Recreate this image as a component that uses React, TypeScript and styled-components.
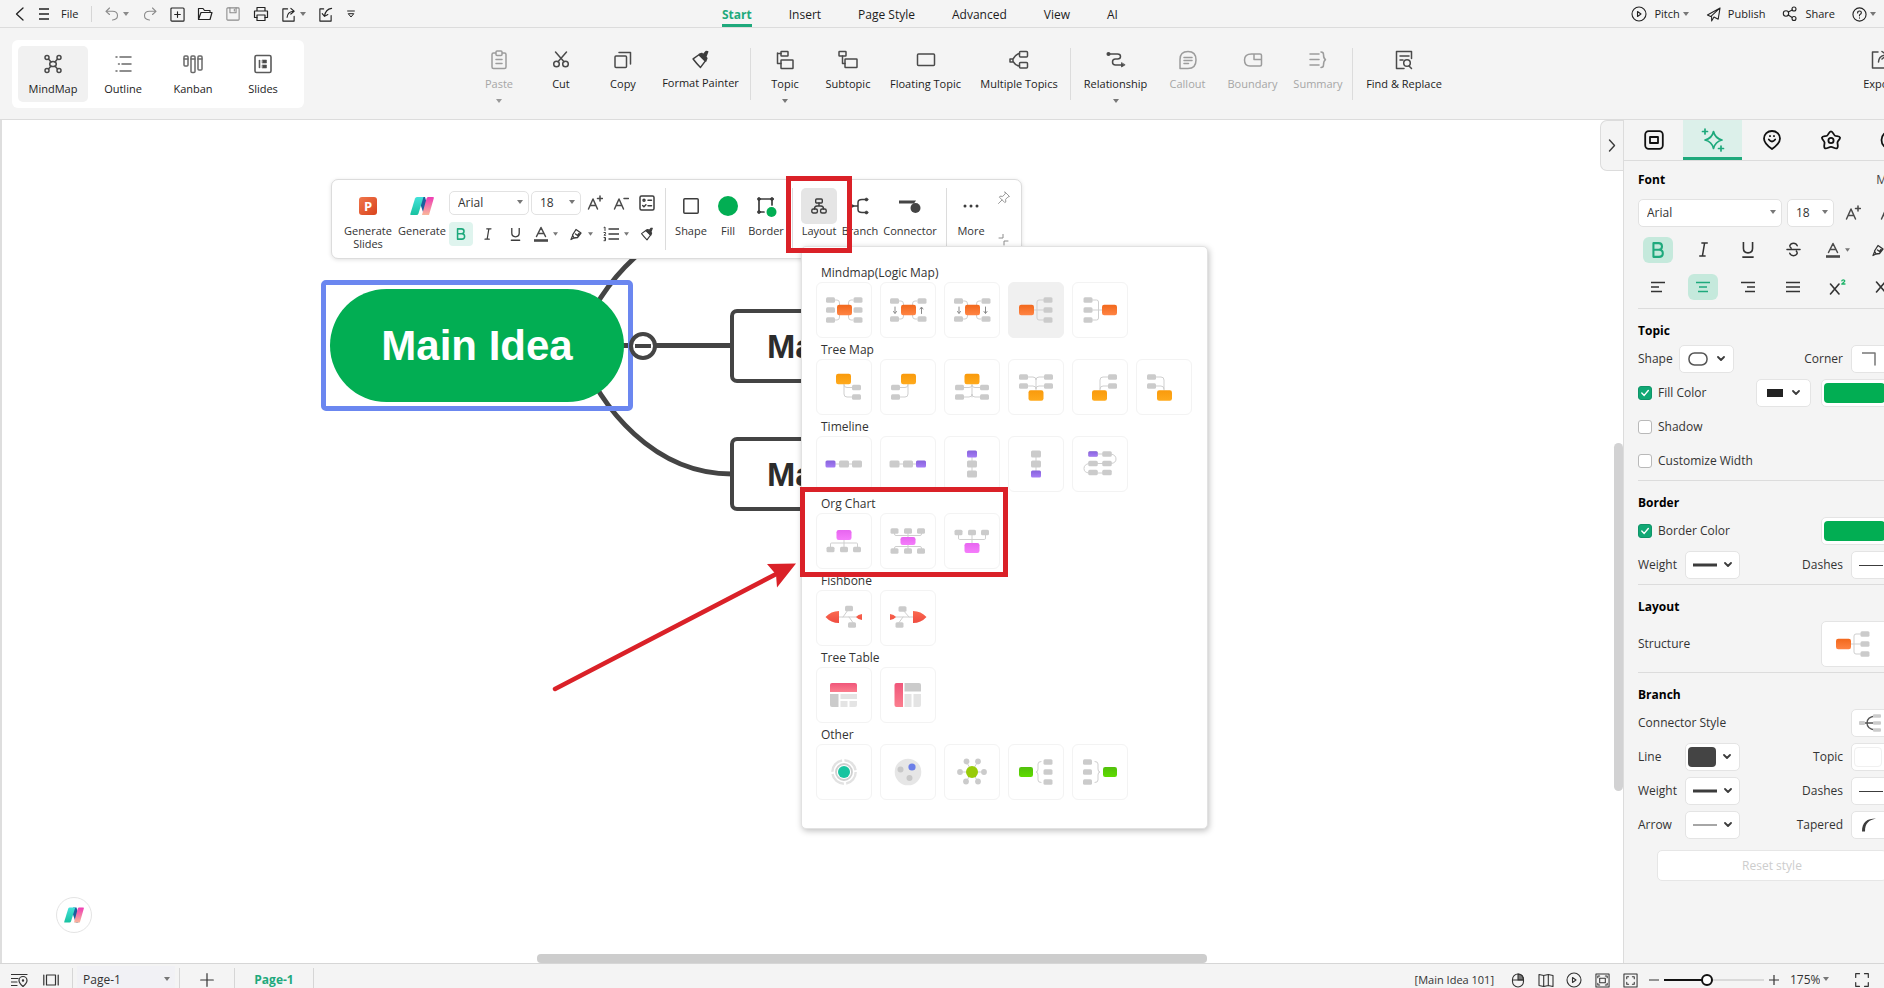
import React from "react";
import styled, { createGlobalStyle, css } from "styled-components";

const green = "#1ea97c";
const fill = "#02ae53";
const ink = "#3c3c3c";
const red = "#da2128";

const Global = createGlobalStyle`
  * { box-sizing: border-box; }
  html, body { margin: 0; padding: 0; }
  body {
    font-family: "Open Sans", "Noto Sans", sans-serif;
    font-size: 12px;
    line-height: 16px;
    color: #1c1c1c;
    background: #f4f4f4;
    overflow: hidden;
  }
  button, select, input { font: inherit; color: inherit; margin: 0; }
  button { background: none; border: 0; padding: 0; cursor: pointer; white-space: nowrap; }
  svg { display: block; flex: none; }
`;

/* ---------- icons ---------- */

type IconProps = { size?: number; w?: number; h?: number; box?: string; sw?: number; color?: string; children?: React.ReactNode };
const Icon = ({ size = 16, w, h, box = "0 0 16 16", sw = 1.2, color = "currentColor", children }: IconProps) => (
  <svg width={w ?? size} height={h ?? size} viewBox={box} fill="none" stroke={color} strokeWidth={sw} strokeLinejoin="round" strokeLinecap="round" aria-hidden="true">
    {children}
  </svg>
);
const Caret = ({ color = "#777", w = 6 }: { color?: string; w?: number }) => (
  <svg width={w} height={4} viewBox="0 0 6 4" aria-hidden="true"><path d="M0 0h6L3 4z" fill={color} /></svg>
);
const Chevron = () => <Icon w={8} h={6} box="0 0 8 6" sw={1.8} color={ink}><path d="M1 1l3 3 3-3" /></Icon>;

const NLogo = ({ w = 24, h = 18 }: { w?: number; h?: number }) => (
  <svg width={w} height={h} viewBox="0 0 24 18" aria-hidden="true">
    <path d="M11 0h4l4 14-2 4h-3L10 6z" fill="#1b5f9e" />
    <path d="M7 0h6.5L8.5 16.500Q8 18 6.500 18H1Q0 18 .3 17L5 1.500Q5.500 0 7 0z" fill="url(#gTeal)" />
    <path d="M18 0h5q1.200 0 .8 1.200L19 18h-7l4.500-16.500Q17 0 18 0z" fill="url(#gPink)" />
  </svg>
);

const HiddenDefs = styled.svg`position: absolute; width: 0; height: 0;`;
const Defs = () => (
  <HiddenDefs aria-hidden="true">
    <defs>
      {[
        ["gTeal", "#43e2da", "#18c2a0"], ["gPink", "#ee3bb4", "#f9b79a"], ["orange", "#f2681c", "#ff8444"],
        ["amber", "#f99a0c", "#ffaa1c"], ["violet", "#8763dd", "#a67df5"], ["magenta", "#e765f0", "#f57dfb"],
        ["coral", "#fb6a50", "#ef4b40"], ["rose", "#f0567a", "#fb7e8e"], ["lime", "#52c00c", "#5fdc00"],
      ].map(([id, a, b]) => (
        <linearGradient key={id} id={id} x1="0" y1="0" x2="0" y2="1">
          <stop offset="0" stopColor={a} /><stop offset="1" stopColor={b} />
        </linearGradient>
      ))}
    </defs>
  </HiddenDefs>
);

const Brush = ({ s = 18, color = ink }: { s?: number; color?: string }) => (
  <Icon size={s} box="0 0 18 18" sw={1.4} color={color}>
    <path d="M7.500 4.500L2 8.500q3 4 7 8l4.500-6z" />
    <path d="M8 4l6 6.500 1-2.700-1-1.300 1.800-4.800-1.500-.2-2.800 3-1.300-1.300z" fill={color} />
  </Icon>
);
const TextA = ({ sup }: { sup?: string }) => (
  <Icon w={16} h={16} sw={1.5} color="#4a4a4a">
    <path d="M1.500 14L6 4l4.500 10M3.200 10.500h5.600" />
    {sup === "+" ? <path d="M10.500 3.500h5M13 1v5" /> : <path d="M11 3.500h4.500" />}
  </Icon>
);
const FontColor = () => (
  <Icon w={14} h={16} box="0 0 14 16" sw={1.5} color="#4a4a4a">
    <path d="M2.500 10.500L7 1.500l4.500 9M4 7.500h6" /><path d="M0 14.500h14" strokeWidth={2.6} strokeLinecap="butt" />
  </Icon>
);
const Marker = () => (
  <Icon w={14} h={14} box="0 0 14 14" sw={1.3}>
    <path d="M3.500 8L7 2.500l5 3.500-3.500 4.500-3.500.5zM5 11l-3 1.500L3.500 9M6.500 7l2 1.500L10 6.500" />
  </Icon>
);
const ItalicI = ({ s = 14 }: { s?: number }) => <Icon size={s} box="0 0 14 14" sw={1.4}><path d="M5.500 1h5M3.500 13h5M8 1L6 13" /></Icon>;
const UnderU = ({ s = 14 }: { s?: number }) => <Icon size={s} box="0 0 14 14" sw={1.4}><path d="M3 0v5.500q0 4 4 4t4-4V0M2.500 13.200h9" /></Icon>;
const BoldB = ({ s = 14 }: { s?: number }) => (
  <Icon size={s} box="0 0 14 14" sw={1.8} color={green}><path d="M3 1h4.500q3 0 3 2.900t-3 2.900H3zM3 6.800h5q3.200 0 3.200 3.100T8 13H3z" /></Icon>
);
const Lines = ({ xs, color }: { xs: [number, number][]; color?: string }) => (
  <Icon w={16} h={12} box="0 0 16 12" sw={1.5} color={color}>
    {xs.map(([a, b], i) => <path key={i} strokeLinecap="butt" d={`M${a} ${xs.length === 3 ? 1.5 + i * 4.5 : 1 + i * 3.3}H${b}`} />)}
  </Icon>
);
const PlayCircle = ({ s = 16 }: { s?: number }) => <Icon size={s} sw={1.1}><circle cx="8" cy="8" r="7" /><path d="M6.500 5.500l3.500 2.500-3.500 2.500z" /></Icon>;

/* ---------- title bar ---------- */

const Shell = styled.div`display: flex; flex-direction: column; height: 100vh; overflow: hidden; background: #f4f4f4;`;
const TitleBar = styled.header`
  display: grid; grid-template-columns: minmax(0, 722px) auto 1fr;
  height: 28px; flex: none; border-bottom: 1px solid #dcdcdc; font-size: 11px;
`;
const QuickBar = styled.div`display: flex; align-items: center; padding: 1px 0 0 11px;`;
const Quick = styled.button<{ $w?: number; $dim?: boolean }>`
  display: flex; align-items: center; justify-content: center; gap: 4px;
  width: ${p => p.$w ?? 28}px; height: 26px; color: ${p => (p.$dim ? "#8a8a8a" : "#222")};
`;
const FileBtn = styled(Quick)`margin-right: 13px; width: auto; padding-left: 1px;`;
const VRule = styled.span`flex: none; width: 1px; height: 16px; background: #d6d6d6;`;
const Tabs = styled.nav`display: flex; gap: 37px;`;
const Tab = styled.a<{ $on?: boolean }>`
  display: flex; align-items: center; height: 27px; padding-top: 2px; text-decoration: none; font-size: 12px;
  color: ${p => (p.$on ? green : "#1c1c1c")}; font-weight: ${p => (p.$on ? 700 : 400)};
  box-shadow: ${p => (p.$on ? `inset 0 -3px ${green}` : "none")};
`;
const TitleActions = styled.div`display: flex; align-items: center; justify-content: flex-end; gap: 17px; padding: 1px 8px 0 0;`;
const TitleAction = styled.button`display: flex; align-items: center; gap: 7px; height: 26px; color: #222;`;
const TightCaret = styled.span`margin-left: -4px;`;

const TitleBarView = () => (
  <TitleBar>
    <QuickBar>
      <Quick $w={16} aria-label="Back"><Icon w={9} h={14} box="0 0 9 14" sw={1.3}><path d="M8 1L1.500 7 8 13" /></Icon></Quick>
      <Quick $w={33} aria-label="Menu"><Icon w={10} h={12} box="0 0 10 12" sw={1.3}><path d="M0 1h10M0 6h10M0 11h10" /></Icon></Quick>
      <FileBtn>File</FileBtn>
      <VRule />
      <Quick $w={50} $dim aria-label="Undo"><Icon size={14} box="0 0 14 14" sw={1.1}><path d="M4.500 1L1 4.300l3.500 3.200M1 4.300h6.500q5 0 5 4.200t-5 4.500" /></Icon><Caret color="#8a8a8a" /></Quick>
      <Quick $w={16} $dim aria-label="Redo"><Icon size={14} box="0 0 14 14" sw={1.1}><path d="M9.500 1L13 4.300 9.500 7.500M13 4.300H6.500q-5 0-5 4.200t5 4.500" /></Icon></Quick>
      <Quick $w={38} aria-label="New"><Icon size={15} sw={1.2}><rect x="1" y="1" width="14" height="14" rx="1" /><path d="M8 5v6M5 8h6" /></Icon></Quick>
      <Quick $w={18} aria-label="Open"><Icon size={16} sw={1.2}><path d="M1.500 13.500v-11H6l1.500 2h5.500v2M1.500 13.500l2.500-7h11l-2 7z" /></Icon></Quick>
      <Quick $w={38} $dim aria-label="Save"><Icon size={14} sw={1.2}><rect x="1" y="1" width="14" height="14" rx="1" /><path d="M4.500 1v5.500h7V1M9.500 2.500v2" /></Icon></Quick>
      <Quick $w={18} aria-label="Print"><Icon size={16} sw={1.2}><path d="M4 5V1.500h8V5M4 11.500H1.500V5h13v6.500H12" /><rect x="4" y="9" width="8" height="5.500" /></Icon></Quick>
      <Quick $w={46} aria-label="Export"><Icon size={15} sw={1.2}><path d="M7 2H2v13h12v-5M10.500 1.500L14 4.500l-3.500 3M14 4.500q-7 0-7.500 6.500" /></Icon><Caret /></Quick>
      <Quick $w={19} aria-label="Import"><Icon size={15} sw={1.2}><path d="M6 2H2v13h12V9M14.500 1.500Q8 2.500 7 9.500M4.500 7l2.500 3 3.500-2" /></Icon></Quick>
      <Quick $w={32} aria-label="Customize"><Icon w={8} h={8} box="0 0 8 8" sw={1}><path d="M.6 1h6.800M1.500 4L4 7l2.500-3z" /></Icon></Quick>
    </QuickBar>
    <Tabs>
      {["Start", "Insert", "Page Style", "Advanced", "View", "AI"].map((t, i) => <Tab key={t} href="#" $on={i === 0}>{t}</Tab>)}
    </Tabs>
    <TitleActions>
      <TitleAction><PlayCircle /><span>Pitch</span><TightCaret><Caret /></TightCaret></TitleAction>
      <TitleAction><Icon size={15} sw={1.1}><path d="M15 1L1.500 8.500l3.500 1.700L15 1l-2 12-4.500-2.300L6 15v-4.500" /></Icon>Publish</TitleAction>
      <TitleAction><Icon size={16} sw={1.1}><circle cx="4" cy="7.500" r="2.700" /><circle cx="12" cy="3" r="2" /><circle cx="12" cy="12.500" r="2" /><path d="M6.300 6L10.200 4M6.200 9l4 2.500" /></Icon>Share</TitleAction>
      <TitleAction aria-label="Help"><Icon size={15} sw={1.2}><circle cx="8" cy="8" r="7" /><path d="M6 6.300q0-2.100 2-2.100t2 1.900q0 1.200-2 2.300v1M8 11.600v.2" /></Icon><TightCaret><Caret /></TightCaret></TitleAction>
    </TitleActions>
  </TitleBar>
);

/* ---------- ribbon ---------- */

const Ribbon = styled.div`display: flex; height: 92px; flex: none; border-bottom: 1px solid #dcdcdc; font-size: 11px; overflow: hidden;`;
const ViewCard = styled.div`display: flex; margin: 12px 0 0 12px; padding: 6px; height: 68px; border-radius: 6px; background: #fff; flex: none;`;
const ViewBtn = styled.button<{ $on?: boolean }>`
  display: flex; flex-direction: column; align-items: center; justify-content: center; gap: 7px; width: 70px; height: 56px; padding-top: 3px;
  border-radius: 5px; background: ${p => (p.$on ? "#f1f1f1" : "none")}; color: #1c1c1c;
`;
const Tools = styled.div`display: flex; margin-left: 164px; flex: 1; padding-top: 22px;`;
const RibbonBtn = styled.button<{ $w: number; $dim?: boolean }>`
  display: flex; flex-direction: column; align-items: center; flex: none; width: ${p => p.$w}px; height: 60px;
  color: ${p => (p.$dim ? "#a6a6a6" : "#1c1c1c")};
  & > span { margin: 6px 0 7px; height: 16px; }
  & > svg:first-child { color: ${p => (p.$dim ? "#9c9c9c" : "#4a4a4a")}; }
`;
const RibbonRule = styled.span<{ $l?: number; $r?: number }>`width: 1px; height: 52px; flex: none; background: #dcdcdc; margin: -2px ${p => p.$r ?? 3}px 0 ${p => p.$l ?? 3}px;`;
const ExportBtn = styled(RibbonBtn)`margin-left: auto; margin-right: -26px;`;

const R = ({ children }: { children: React.ReactNode }) => <Icon size={20} box="0 0 20 20" sw={1.5}>{children}</Icon>;

const RibbonView = () => (
  <Ribbon>
    <ViewCard>
      <ViewBtn $on><Icon size={20} box="0 0 20 20" sw={1.5} color="#4a4a4a"><ellipse cx="10" cy="10" rx="3.300" ry="2.600" /><circle cx="4" cy="3.500" r="2" /><circle cx="16" cy="3.500" r="2" /><circle cx="4" cy="16.500" r="2" /><circle cx="16" cy="16.500" r="2" /><path d="M5.500 5L8 8M14.500 5L12 8M5.500 15L8 12M14.500 15L12 12" /></Icon>MindMap</ViewBtn>
      <ViewBtn><Icon size={20} box="0 0 20 20" sw={1.5} color="#6a6a6a"><path d="M7 3h11M9 10h9M7 17h11M3 3h1M5.500 10h.8M3 17h1" /></Icon>Outline</ViewBtn>
      <ViewBtn><Icon size={20} box="0 0 20 20" sw={1.5} color="#6a6a6a"><rect x="1" y="2" width="4" height="10" rx="1" /><rect x="8" y="2" width="4" height="16.500" rx="1" /><rect x="15" y="2" width="4" height="14" rx="1" /><path d="M1 5h4M8 5h4M15 5h4" /></Icon>Kanban</ViewBtn>
      <ViewBtn><Icon size={20} box="0 0 20 20" sw={1.6} color="#5a5a5a"><rect x="2" y="1.500" width="16" height="17" rx="1.500" /><path d="M6.500 6.500v7" /><path d="M9.500 6h4v3h-4zM9.500 11h4v3h-4z" fill="#4a4a4a" strokeWidth=".6" /></Icon>Slides</ViewBtn>
    </ViewCard>
    <Tools>
      <RibbonBtn $w={62} $dim><R><rect x="3" y="3" width="14" height="15.500" rx="1.500" /><rect x="7" y="1" width="6" height="4.500" rx="1" fill="#f4f4f4" /><path d="M7 9.500h6M7 13.500h6" /></R><span>Paste</span><Caret color="#999" /></RibbonBtn>
      <RibbonBtn $w={62}><R><circle cx="5.500" cy="14" r="2.800" /><circle cx="14.500" cy="14" r="2.800" /><path d="M4.500 2l8.500 9.800M15.500 2L7 11.800" /></R><span>Cut</span></RibbonBtn>
      <RibbonBtn $w={62}><R><rect x="2" y="6" width="11.500" height="11.500" rx="1" /><path d="M6 2.500h11.500V14" /></R><span>Copy</span></RibbonBtn>
      <RibbonBtn $w={93}><Brush s={19} /><span>Format Painter</span></RibbonBtn>
      <RibbonRule />
      <RibbonBtn $w={62}><R><path d="M2.500 3v10.500H6M2.500 3.500H6" /><rect x="6" y="1.500" width="7" height="4.500" rx=".5" /><rect x="6" y="10" width="12" height="8.500" rx=".5" /></R><span>Topic</span><Caret /></RibbonBtn>
      <RibbonBtn $w={64}><R><rect x="1" y="1.500" width="7" height="4.500" rx=".5" /><path d="M4.500 6v7.500H7" /><rect x="7" y="9" width="12" height="8.500" rx=".5" /></R><span>Subtopic</span></RibbonBtn>
      <RibbonBtn $w={91}><R><rect x="1.500" y="4" width="17" height="11.500" rx="1" /></R><span>Floating Topic</span></RibbonBtn>
      <RibbonBtn $w={96}><R><path d="M1 9h3v3H1zM4 9q3-5 6.500-5.500M4 11.500Q7 16 10.500 16" /><rect x="10.500" y="1.500" width="8" height="5.500" rx="1" /><rect x="10.500" y="12.500" width="8" height="5.500" rx="1" /></R><span>Multiple Topics</span></RibbonBtn>
      <RibbonRule $r={0} />
      <RibbonBtn $w={89}><R><circle cx="2.500" cy="4" r="1.300" fill="#4a4a4a" /><path d="M3 4h8.500q3 0 3 2.500T11.500 9H9.500q-3 0-3 3t3 3H16" /><path d="M15.500 13v4l3.300-2z" fill="#4a4a4a" strokeWidth=".8" /></R><span>Relationship</span><Caret /></RibbonBtn>
      <RibbonBtn $w={55} $dim><R><path d="M2 18.500V9.500q0-8 8-8t8 8.500-8 8.500zM6 7.500h8M6 10.500h8M6 13.500h4.500" /></R><span>Callout</span></RibbonBtn>
      <RibbonBtn $w={75} $dim><R><path d="M8.500 4H17q1.500 0 1.500 1.500v9q0 1.500-1.500 1.500H7q-5.500 0-5.500-6t7-6zM11 4v5.500h7.500" /></R><span>Boundary</span></RibbonBtn>
      <RibbonBtn $w={56} $dim><R><path d="M2 4h9M2 9.500h9M2 15h9M13 2q2.500 0 2.500 2.500 0 4 2 5.200-2 1.300-2 5.300 0 2.500-2.500 2.500" /></R><span>Summary</span></RibbonBtn>
      <RibbonRule $l={6} $r={4} />
      <RibbonBtn $w={94}><R><path d="M10 18.500H2.500v-17h15v7M6 6h9M6 10h3" /><circle cx="13" cy="13" r="3.300" /><path d="M15 16l2.500 2.500" /></R><span>Find &amp; Replace</span></RibbonBtn>
      <ExportBtn $w={60}><R><path d="M8 2H2.500v16h15v-5M12 1.500L17 5l-5 4M17 5Q9 5 8.500 12" /></R><span>Export</span></ExportBtn>
    </Tools>
  </Ribbon>
);

/* ---------- layout tile drawings ---------- */

const G = "#cbcbcb";
type P = [number, number];
const Node = ({ c, w = 9, h = 5.5, f = G, r = 1.5 }: { c: P; w?: number; h?: number; f?: string; r?: number }) => (
  <rect x={c[0] - w / 2} y={c[1] - h / 2} width={w} height={h} rx={r} fill={f} stroke="none" />
);
const Root = ({ c, f, h = 10.5 }: { c: P; f: string; h?: number }) => <Node c={c} w={15} h={h} r={2.2} f={`url(#${f})`} />;
const Arrow = ({ x, up }: { x: number; up?: boolean }) => (
  <path d={up ? `M${x} 31.500v-6M${x - 1.5} 27l1.500-2 1.500 2` : `M${x} 25v6M${x - 1.5} 29.500l1.500 2 1.500-2`} stroke="#8a8a8a" strokeWidth="1" />
);
const nodes = (xs: number[], ys: number[], w?: number) => xs.flatMap(x => ys.map(y => <Node key={`${x}-${y}`} c={[x, y]} w={w} />));
const wings = (d: number) => (
  <path d={`M19 ${28 - d}h2q2.500 0 2.500 3v2M37 ${28 - d}h-2q-2.500 0-2.500 3v2M19 ${28 + d}h2q2.500 0 2.500-3v-2M37 ${28 + d}h-2q-2.500 0-2.500-3v-2`} />
);
const logicRight = <><path d="M26 28h10M36 18h-5q-2 0-2 2v16q0 2 2 2h5" />{nodes([40], [18, 28, 38])}<Root c={[18.5, 28]} f="orange" /></>;

const groups: { name: string; tiles: React.ReactNode[] }[] = [
  { name: "Mindmap(Logic Map)", tiles: [
    <>{wings(10)}{nodes([14.5, 42], [18, 28, 38])}<Root c={[28.5, 28]} f="orange" /></>,
    <>{wings(9)}{nodes([14.5, 42], [19, 37])}<Root c={[28.5, 28]} f="orange" /><Arrow x={15} /><Arrow x={41.5} up /></>,
    <>{wings(9)}{nodes([14.5, 42], [19, 37])}<Root c={[28.5, 28]} f="orange" /><Arrow x={15} /><Arrow x={41.5} /></>,
    logicRight,
    <><path d="M30 28H20M20 18h4.500q2 0 2 2v16q0 2-2 2H20" />{nodes([16], [18, 28, 38])}<Root c={[37.5, 28]} f="orange" /></>,
  ] },
  { name: "Tree Map", tiles: [
    <><path d="M28 25v10q0 3 3 3h6M28 26q0 2.500 3 2.500h6" />{nodes([40.5], [28.5, 38])}<Root c={[27.5, 20]} f="amber" /></>,
    <><path d="M28 25v10q0 3-3 3h-6M28 26q0 2.500-3 2.500h-6" />{nodes([15.5], [28.5, 38])}<Root c={[28.5, 20]} f="amber" /></>,
    <><path d="M28 25v13M19 38h6q3 0 3-3 0 3 3 3h6M19 28.500h6q3 0 3-2.500 0 2.500 3 2.500h6" />{nodes([15.5, 40.5], [28.5, 38])}<Root c={[28, 20]} f="amber" /></>,
    <><path d="M28 31V21M19 18h6q3 0 3 3 0-3 3-3h6M19 27h6q3 0 3 3 0-3 3-3h6" />{nodes([15.5, 40.5], [18, 27])}<Root c={[28, 36.5]} f="amber" /></>,
    <><path d="M28 31V21q0-3 3-3h6M28 30q0-3 3-3h6" />{nodes([40.5], [18, 27])}<Root c={[27.5, 36.5]} f="amber" /></>,
    <><path d="M28 31V21q0-3-3-3h-6M28 30q0-3-3-3h-6" />{nodes([15.5], [18, 27])}<Root c={[28.5, 36.5]} f="amber" /></>,
  ] },
  { name: "Timeline", tiles: [
    <><path d="M15 28h26" />{[14.5, 28, 41].map((x, i) => <Node key={x} c={[x, 28]} w={10} h={7} f={i === 0 ? "url(#violet)" : G} />)}</>,
    <><path d="M15 28h26" />{[14.5, 28, 41].map((x, i) => <Node key={x} c={[x, 28]} w={10} h={7} f={i === 2 ? "url(#violet)" : G} />)}</>,
    <><path d="M28 18v20" />{[18, 28, 38].map((y, i) => <Node key={y} c={[28, y]} w={10} h={7} f={i === 0 ? "url(#violet)" : G} />)}</>,
    <><path d="M28 18v20" />{[18, 28, 38].map((y, i) => <Node key={y} c={[28, y]} w={10} h={7} f={i === 2 ? "url(#violet)" : G} />)}</>,
    <><path d="M22 18h17q5 1 5 5t-5 4.500H17q-5 1-5 5t5 4.500h18" />{nodes([21, 35], [18, 27.5, 36.5], 9.5)}<Node c={[21, 18]} w={9.5} f="url(#violet)" /></>,
  ] },
  { name: "Org Chart", tiles: [
    <><path d="M28 27v7M14.500 34v-3q0-1 1-1h25q1 0 1 1v3" />{nodes([14.5, 28, 41], [36.5], 8)}<Root c={[28, 22]} f="magenta" h={10} /></>,
    <><path d="M14.500 20v1q0 1.500 1.500 1.500h24q1.500 0 1.500-1.500v-1M14.500 36v-1q0-1.500 1.500-1.500h24q1.500 0 1.500 1.500v1M28 20v16" />{nodes([14.5, 28, 41], [18, 38], 8)}<Root c={[28, 28]} f="magenta" h={8} /></>,
    <><path d="M28 22v8M14.500 22v3q0 1.500 1 1.500h25q1 0 1-1.500v-3" />{nodes([14.5, 28, 41], [19.5], 8)}<Root c={[28, 35]} f="magenta" h={10} /></>,
  ] },
  { name: "Fishbone", tiles: [
    <><path d="M22 27h20M27 27l5-7M33 27l5 7" /><path d="M23 21v12q-8 0-13.500-6Q15 21 23 21zM46 24v6q-4-.5-6-3 2-2.500 6-3z" fill="url(#coral)" stroke="none" />{nodes([33], [18.5], 8)}{nodes([36], [35], 8)}</>,
    <><path d="M14 27h20M23 20l6 7M18 34l5-7" /><path d="M33 21v12q8 0 13.500-6Q41 21 33 21zM10 24v6q4-.5 6-3-2-2.500-6-3z" fill="url(#coral)" stroke="none" />{nodes([22.5], [19], 8)}{nodes([19.5], [35], 8)}</>,
  ] },
  { name: "Tree Table", tiles: [
    <g stroke="none"><path d="M14 25v-7q0-2 2-2h23q2 0 2 2v7z" fill="url(#rose)" /><path d="M14 27h8.500v13H16q-2 0-2-2z" fill={G} /><path d="M24.500 27H41v5H24.500zM24.500 34h7v6h-7zM33.500 34H41v4q0 2-2 2h-5.500z" fill="#e4e4e4" /></g>,
    <g stroke="none"><path d="M23 16v24h-6.500q-2 0-2-2V18q0-2 2-2z" fill="url(#rose)" /><path d="M24.500 16H39q2 0 2 2v6.500H24.500z" fill={G} /><path d="M24.500 27h7v13h-7zM33.500 27H41v11q0 2-2 2h-5.500z" fill="#e4e4e4" /></g>,
  ] },
  { name: "Other", tiles: [
    <><circle cx="28" cy="28" r="11.700" stroke="#e2e2e2" strokeWidth="2.400" strokeDasharray="16 2.400" strokeLinecap="butt" /><circle cx="28" cy="28" r="8" stroke="#cfcfcf" strokeWidth="1.800" /><circle cx="28" cy="28" r="6" fill="#18c4a0" stroke="none" /></>,
    <g stroke="none"><circle cx="28" cy="28" r="13.300" fill="#e6e6e6" /><circle cx="32" cy="23" r="3.600" fill="#6c7fe8" /><circle cx="20.500" cy="25.500" r="3" fill="#c8c8c8" /><circle cx="29.500" cy="34" r="3" fill="#c8c8c8" /></g>,
    <><path d="M16 28h24M22.500 18L34 38M33.500 18L22 38" /><g stroke="none" fill={G}>{([[22.5, 17.5], [34, 17.5], [16, 28], [40, 28], [22, 37.5], [34, 37.5]] as P[]).map(([x, y], i) => <circle key={i} cx={x} cy={y} r="2.900" />)}</g><circle cx="28" cy="28" r="6" fill="#98cb08" stroke="none" /></>,
    <><path d="M33 17.500q-3 0-3 2.500v5q0 3-2 3 2 0 2 3v5q0 2.500 3 2.500" />{nodes([40], [18, 28, 38])}<Node c={[18, 28]} w={14} h={10} r={2.2} f="url(#lime)" /></>,
    <><path d="M23 17.500q3 0 3 2.500v5q0 3 2 3-2 0-2 3v5q0 2.500-3 2.500" />{nodes([15.5], [18, 28, 38])}<Node c={[38, 28]} w={14} h={10} r={2.2} f="url(#lime)" /></>,
  ] },
];

/* ---------- drop-downs ---------- */

const SelectBox = styled.span<{ $w: number; $h: number; $tint?: string; $flat?: boolean }>`
  position: relative; display: inline-flex; flex: none; width: ${p => p.$w}px; height: ${p => p.$h}px;
  & > select {
    appearance: none; width: 100%; height: 100%; padding: 0 14px 0 ${p => (p.$flat ? 6 : 8)}px;
    border: ${p => (p.$flat ? 0 : "1px solid #e2e2e2")}; border-radius: ${p => (p.$flat ? 0 : 5)}px;
    background: ${p => p.$tint ?? "#fff"}; outline: 0;
  }
  & > svg { position: absolute; right: ${p => (p.$flat ? 5 : 6)}px; top: calc(50% - 3px); pointer-events: none; }
`;
const Select = ({ label, value, w, h, tint, flat }: { label: string; value: string; w: number; h: number; tint?: string; flat?: boolean }) => (
  <SelectBox $w={w} $h={h} $tint={tint} $flat={flat}>
    <select aria-label={label} defaultValue={value}><option>{value}</option></select>
    <Caret />
  </SelectBox>
);

/* ---------- canvas ---------- */

const Main = styled.main`display: flex; flex: 1; min-height: 0;`;
const Stage = styled.section`position: relative; flex: 1; min-width: 0; overflow: hidden; background: #fff; box-shadow: inset 2px 0 #dedede;`;
const Branches = styled.svg`position: absolute; left: 0; top: 0; width: 100%; height: 100%; pointer-events: none;`;
const Selection = styled.div`position: absolute; left: 321px; top: 160px; width: 312px; height: 131px; border: 5px solid #6b87f0; border-radius: 5px;`;
const MainTopic = styled.div`
  position: absolute; left: 330px; top: 169px; width: 294px; height: 113px; border-radius: 57px; background: ${fill}; color: #fff;
  display: flex; align-items: center; justify-content: center; font: 700 42px/48px "Liberation Sans", Arial, sans-serif;
`;
const ChildTopic = styled.div<{ $y: number }>`
  position: absolute; left: 730px; top: ${p => p.$y}px; width: 260px; height: 74px; border: 4px solid #444; border-radius: 7px; background: #fff; color: #2c2c2c;
  display: flex; align-items: center; padding-left: 33px; font: 700 34px/40px "Liberation Sans", Arial, sans-serif; white-space: nowrap;
`;
const Fold = styled.button`
  position: absolute; left: 629px; top: 212px; width: 28px; height: 28px; border: 4px solid #444; border-radius: 50%; background: #fff;
  display: flex; align-items: center; justify-content: center;
  &::before { content: ""; width: 16px; height: 4px; background: #444; }
`;
const AiBubble = styled.button`
  position: absolute; left: 56px; bottom: 30px; width: 36px; height: 36px; border: 1px solid #e4e4e4; border-radius: 50%; background: #fff;
  display: flex; align-items: center; justify-content: center;
`;
const HScroll = styled.div`position: absolute; left: 537px; right: 416px; bottom: 0; height: 9px; border-radius: 4px; background: #cdcdcd;`;
const VScroll = styled.div`position: absolute; right: 0; top: 323px; width: 9px; height: 348px; border-radius: 5px; background: #d2d2d3;`;
const PanelHandle = styled.button`
  position: absolute; right: 0; top: 0; width: 23px; height: 51px; border: 1px solid #dcdcdc; border-right: 0; border-radius: 7px 0 0 7px; background: #f4f4f4;
  display: flex; align-items: center; justify-content: center;
`;

const FloatBar = styled.div`
  position: absolute; left: 331px; top: 59px; height: 80px; width: 691px; border: 1px solid #dcdcdc; border-radius: 7px; background: #fff;
  box-shadow: 0 1px 4px rgba(0, 0, 0, .12); display: flex; padding: 8px 0 0 9px; font-size: 11px; color: #333;
`;
const Big = styled.button<{ $w: number; $on?: boolean }>`
  display: flex; flex-direction: column; align-items: center; flex: none; width: ${p => p.$w}px; height: 64px; line-height: 13px;
  & > i { display: flex; align-items: center; justify-content: center; width: 36px; height: 36px; border-radius: 5px; background: ${p => (p.$on ? "#e5e5e5" : "none")}; }
`;
const BarRule = styled.span<{ $l: number; $r: number }>`flex: none; width: 1px; height: 62px; background: #dcdcdc; margin: 0 ${p => p.$r}px 0 ${p => p.$l}px;`;
const TextTools = styled.div`display: flex; flex-direction: column; gap: 7px; margin-top: 3px; width: 211px; font-size: 12px;`;
const ToolRow = styled.div`display: flex; align-items: center; height: 24px;`;
const Mini = styled.button<{ $w: number; $on?: boolean }>`
  display: flex; align-items: center; justify-content: center; gap: 5px; width: ${p => p.$w}px; height: 24px; flex: none; color: ${ink};
  border-radius: 4px; background: ${p => (p.$on ? "#dff4ee" : "none")};
`;
const Gap = styled.span<{ $w: number }>`width: ${p => p.$w}px; flex: none;`;
const Corner = styled.div`display: flex; flex-direction: column; justify-content: space-between; height: 58px; padding-top: 1px;`;
const Dot = styled.span`width: 20px; height: 20px; border-radius: 50%; background: ${fill};`;
const PBadge = styled.span`
  display: flex; align-items: center; justify-content: center; width: 18px; height: 18px; border-radius: 3px; background: linear-gradient(135deg, #f0764c, #d9431c);
  color: #fff; font: 700 13px/18px "Open Sans", sans-serif;
`;

const Popup = styled.div`
  position: absolute; left: 801px; top: 126px; width: 407px; height: 583px; border: 1px solid #e2e2e2; border-radius: 5px; background: #fff;
  box-shadow: 1px 2px 6px rgba(0, 0, 0, .25); padding: 17px 14px 0; color: #333;
`;
const Group = styled.section`height: 77px;`;
const GroupName = styled.h3`margin: 0; padding-left: 5px; height: 18px; font-size: 12px; line-height: 18px; font-weight: 400;`;
const TileRow = styled.div`display: flex; gap: 8px;`;
const Tile = styled.button<{ $on?: boolean }>`
  width: 56px; height: 56px; flex: none; border-radius: 6px; border: 1px solid ${p => (p.$on ? "#f0f0f0" : "#f3f3f3")}; background: ${p => (p.$on ? "#f0f0f0" : "#fff")};
  & > svg { margin: -1px; }
`;
const Highlight = styled.div<{ $org?: boolean }>`
  position: absolute; border: 5px solid ${red}; pointer-events: none;
  ${p => (p.$org ? css`left: 800px; top: 367px; width: 208px; height: 90px;` : css`left: 786px; top: 56px; width: 66px; height: 77px;`)}
`;

const TileArt = ({ children, w = 56, h = 56, box = "0 0 56 56" }: { children: React.ReactNode; w?: number; h?: number; box?: string }) => (
  <svg width={w} height={h} viewBox={box} fill="none" stroke="#cfcfcf" strokeWidth="1" strokeLinecap="round" strokeLinejoin="round" aria-hidden="true">{children}</svg>
);

const FloatBarView = () => (
  <FloatBar>
    <Big $w={54}><i><PBadge>P</PBadge></i>Generate<br />Slides</Big>
    <Big $w={54}><i><NLogo /></i>Generate</Big>
    <TextTools>
      <ToolRow>
        <Select label="Font" value="Arial" w={80} h={24} /><Gap $w={2} /><Select label="Font size" value="18" w={50} h={24} />
        <Mini $w={27} aria-label="Grow font"><TextA sup="+" /></Mini>
        <Mini $w={26} aria-label="Shrink font"><TextA /></Mini>
        <Mini $w={26} aria-label="Text options"><Icon size={16} sw={1.5}><rect x="1" y="1" width="14" height="14" rx="1.500" /><circle cx="5" cy="5.300" r="1" /><path d="M3.700 10.500l1.200 1.200 2-2M9 5.300h3.500M9 10.700h3.500" /></Icon></Mini>
      </ToolRow>
      <ToolRow>
        <Mini $w={24} $on aria-label="Bold"><BoldB s={12} /></Mini>
        <Mini $w={30} aria-label="Italic"><ItalicI s={12} /></Mini>
        <Mini $w={24} aria-label="Underline"><UnderU s={13} /></Mini>
        <Mini $w={38} aria-label="Font color"><FontColor /><Caret w={5} /></Mini>
        <Mini $w={32} aria-label="Highlight"><Marker /><Caret w={5} /></Mini>
        <Mini $w={37} aria-label="Numbering"><Icon w={16} h={16} sw={1.5} color={ink}><path d="M5.500 3H16M5.500 8H16M5.500 13H16" strokeLinecap="butt" /><path d="M1 1.500l1-.5v3.500M1 6.500h1.500v1.200L1 9.200h1.700M1 11.500h1.500v3.200H1M1.500 13h1" strokeWidth="1" /></Icon><Caret w={5} /></Mini>
        <Mini $w={26} aria-label="Format painter"><Brush s={14} /></Mini>
      </ToolRow>
    </TextTools>
    <BarRule $l={5} $r={6} />
    <Big $w={38}><i><Icon size={16} sw={1.5} color={ink}><rect x=".8" y=".8" width="14.400" height="14.400" rx="1" /></Icon></i>Shape</Big>
    <Big $w={36}><i><Dot /></i>Fill</Big>
    <Big $w={40}><i><Icon w={22} h={22} box="0 0 22 22" sw={1.7} color={ink}><path d="M4 4h13M4 4v13M17 4v6M4 17h5" /><g fill={ink} strokeWidth=".8"><circle cx="4" cy="4" r="1.500" /><circle cx="17" cy="4" r="1.500" /><circle cx="4" cy="17" r="1.500" /></g><circle cx="16.500" cy="17" r="5" fill={fill} stroke="none" /></Icon></i>Border</Big>
    <BarRule $l={6} $r={8} />
    <Big $w={36} $on><i><Icon size={16} sw={1.4} color={ink}><rect x="4.700" y="1" width="6.600" height="4" rx="1" /><rect x=".8" y="11" width="5.600" height="4" rx="1.500" /><rect x="9.600" y="11" width="5.600" height="4" rx="1.500" /><path d="M8 5v3M3.500 11q0-3 2.500-3h4q2.500 0 2.500 3" /></Icon></i>Layout</Big>
    <Big $w={46}><i><Icon size={18} box="0 0 18 18" sw={1.5} color={ink}><path d="M1 9h5M15 2.500h-4q-4 0-4 3v7q0 3 4 3h4" /><g fill={ink} strokeWidth=".6"><circle cx="15.500" cy="2.500" r="1.500" /><circle cx="15.500" cy="15.500" r="1.500" /><circle cx="1.500" cy="9" r="1.200" /></g></Icon></i>Branch</Big>
    <Big $w={54}><i><Icon w={22} h={14} box="0 0 22 14" color="#444"><path d="M0 1.500h17L15 4.500H0z" fill="#444" stroke="none" /><circle cx="16.500" cy="9" r="5" fill="#444" stroke="none" /></Icon></i>Connector</Big>
    <BarRule $l={9} $r={0} />
    <Big $w={48}><i><Icon w={16} h={4} box="0 0 16 4"><g fill={ink} stroke="none"><circle cx="2" cy="2" r="1.500" /><circle cx="8" cy="2" r="1.500" /><circle cx="14" cy="2" r="1.500" /></g></Icon></i>More</Big>
    <Corner>
      <Icon w={17} h={17} box="0 0 17 17" sw={1} color="#9a9a9a"><path d="M10 3l4.500 4.500-1.500.4-2.400 2.400.2 2.700-1 .6-5.400-5.400.6-1 2.700.2L10.100 5zM7 11l-3.500 3.500" /></Icon>
      <Icon w={14} h={12} box="0 0 14 12" sw={1} color="#8c8c8c"><path d="M4 4h4V0M9 11V7h4" /></Icon>
    </Corner>
  </FloatBar>
);

const StageView = () => (
  <Stage>
    <Branches fill="none" stroke="#444" strokeWidth="5" aria-hidden="true">
      <path d="M577 226C600 290 655 354 732 354M577 226C600 162 655 98 732 98M620 225.500H732" />
    </Branches>
    <ChildTopic $y={61}>Main Topic</ChildTopic>
    <ChildTopic $y={189}>Main Topic</ChildTopic>
    <ChildTopic $y={317}>Main Topic</ChildTopic>
    <MainTopic>Main Idea</MainTopic>
    <Selection />
    <Fold aria-label="Collapse branch" />
    <FloatBarView />
    <Popup role="dialog" aria-label="Layout">
      {groups.map((g, gi) => (
        <Group key={g.name}>
          <GroupName>{g.name}</GroupName>
          <TileRow>{g.tiles.map((t, i) => <Tile key={i} $on={gi === 0 && i === 3} aria-label={`${g.name} ${i + 1}`}><TileArt>{t}</TileArt></Tile>)}</TileRow>
        </Group>
      ))}
    </Popup>
    <Highlight />
    <Highlight $org />
    <Branches aria-hidden="true">
      <path d="M555 569L782 451" stroke={red} strokeWidth="4.500" strokeLinecap="round" />
      <path d="M796 443.500L767 444l9 10.500 1 13z" fill={red} />
    </Branches>
    <AiBubble aria-label="AI assistant"><NLogo w={20} h={16} /></AiBubble>
    <HScroll />
    <VScroll />
    <PanelHandle aria-label="Hide panel"><Icon w={8} h={13} box="0 0 8 13" sw={1.4} color={ink}><path d="M1.500 1l5 5.500-5 5.500" /></Icon></PanelHandle>
  </Stage>
);

/* ---------- side panel ---------- */

const Panel = styled.aside`width: 261px; flex: none; overflow: hidden; border-left: 1px solid #dcdcdc; background: #f4f4f4;`;
const PanelInner = styled.div`width: 295px; color: #333;`;
const PanelTabs = styled.div`display: flex; height: 41px; border-bottom: 1px solid #dcdcdc;`;
const PanelTab = styled.button<{ $on?: boolean }>`
  display: flex; align-items: center; justify-content: center; width: 59px; height: 40px; color: ${p => (p.$on ? green : "#111")};
  background: ${p => (p.$on ? "#dcf0ea" : "none")}; box-shadow: ${p => (p.$on ? `inset 0 -3px ${green}` : "none")};
`;
const Block = styled.section<{ $first?: boolean }>`
  margin: 0 13px 0 14px; padding: ${p => (p.$first ? "9px 0 3px" : "12px 0 2px")}; border-bottom: 1px solid #dcdcdc;
  &:last-of-type { border-bottom: 0; }
`;
const Heading = styled.h2`display: flex; justify-content: space-between; margin: 0; height: 21px; font-size: 12px; line-height: 20px; font-weight: 700; color: #000;`;
const MoreLink = styled.a`font-weight: 400; color: #444; text-decoration: none;`;
const Row = styled.div<{ $h?: number }>`display: flex; align-items: center; height: ${p => p.$h ?? 34}px;`;
const FontRows = styled.div`padding-top: 3px;`;
const Name = styled.span<{ $w?: number }>`width: ${p => (p.$w ? `${p.$w}px` : "auto")};`;
const Push = styled.span`margin-left: auto; margin-right: 8px;`;
const End = styled.span`margin-left: auto; display: flex; gap: 10px;`;
const Pick = styled.button<{ $w?: number; $h?: number }>`
  display: flex; align-items: center; justify-content: space-evenly; width: ${p => p.$w ?? 55}px; height: ${p => p.$h ?? 28}px; flex: none;
  border: 1px solid #e4e4e4; border-radius: 5px; background: #fff;
`;
const Swatch = styled.span<{ $w: number; $c: string }>`width: ${p => p.$w}px; height: 20px; border-radius: 4px; background: ${p => p.$c}; border: ${p => (p.$c === "#fff" ? "1px solid #f0f0f0" : 0)};`;
const ColorPick = styled(Pick)`justify-content: flex-start; padding-left: 2px; gap: 7px;`;
const Sq = styled.button<{ $on?: boolean }>`
  display: flex; align-items: center; justify-content: center; gap: 5px; width: 30px; height: 26px; flex: none; margin: 0 10px 0 5px; border-radius: 6px;
  color: ${p => (p.$on ? green : "#333")}; background: ${p => (p.$on ? "#c5e9dc" : "none")};
`;
const Check = styled.label`
  display: flex; align-items: center; gap: 6px;
  & > span { position: relative; display: flex; }
  input { appearance: none; width: 14px; height: 14px; border: 1px solid #b9b9b9; border-radius: 3px; background: #fff; }
  input:checked { background: #10a874; border-color: #0f9468; }
  svg { position: absolute; left: 3px; top: 3px; pointer-events: none; }
`;
const ResetBtn = styled.button`display: block; width: 230px; height: 31px; margin: 8px auto 0; border: 1px solid #e6e6e6; border-radius: 5px; background: #fff; color: #cdcdcd;`;

const CheckBox = ({ text, on }: { text: string; on?: boolean }) => (
  <Check>
    <span><input type="checkbox" defaultChecked={on} />{on && <Icon w={8} h={8} box="0 0 8 8" sw={1.4} color="#fff"><path d="M.8 4l2.400 2.400L7.300 1.500" /></Icon>}</span>
    {text}
  </Check>
);
const Stroke = ({ sw, c = ink }: { sw: number; c?: string }) => <Icon w={24} h={4} box="0 0 24 4" sw={sw} color={c}><path d={sw === 1 ? "M0 2.500h24" : "M0 2h24"} strokeLinecap="butt" /></Icon>;

const PanelView = () => (
  <Panel>
    <PanelInner>
      <PanelTabs>
        <PanelTab aria-label="Page"><Icon size={20} box="0 0 20 20" sw={1.8}><rect x="1.200" y="1.200" width="17.600" height="17.600" rx="3.500" /><rect x="6" y="7" width="8" height="6" /></Icon></PanelTab>
        <PanelTab $on aria-label="Style"><Icon w={24} h={24} box="0 0 24 24" sw={1.7}><path d="M12.500 3.500q1.700 7 8.500 8.500-6.800 1.700-8.500 8.500Q11 13.700 4 12q7-1.500 8.500-8.500zM4 1v5M1.500 3.500h5M20 18v5M17.500 20.500h5" /></Icon></PanelTab>
        <PanelTab aria-label="Marks"><Icon size={20} box="0 0 20 20" sw={1.8}><path d="M10 19q-8-5.500-8-10.500a8 7.500 0 0 1 16 0q0 5-8 10.500z" /><path d="M6.800 9.500q3.200 4 6.400 0M8 6v.2M12 6v.2" /></Icon></PanelTab>
        <PanelTab aria-label="Clipart"><Icon size={20} box="0 0 20 20" sw={1.8}><path d="M10 1.300c2 0 2.500 3.700 4 4.400s4.500 0 5 1.700-2.300 3.300-2.500 5 1.200 4.700-.4 5.800-3.900-1.400-6.100-1.400-4.500 2.500-6.100 1.400-.1-4.100-.4-5.800S.500 9.100 1 7.400s3.500-1 5-1.700 2-4.400 4-4.400z" /><circle cx="10" cy="10.500" r="2.600" /></Icon></PanelTab>
        <PanelTab aria-label="History"><Icon size={20} box="0 0 20 20" sw={1.8}><circle cx="10" cy="10" r="8.500" /><path d="M10 5v5h4" /></Icon></PanelTab>
      </PanelTabs>

      <Block $first>
        <Heading>Font <MoreLink href="#">More</MoreLink></Heading>
        <FontRows>
          <Row $h={37}>
            <Select label="Font family" value="Arial" w={144} h={28} /><Gap $w={5} /><Select label="Size" value="18" w={47} h={28} />
            <Mini $w={38} aria-label="Increase size"><TextA sup="+" /></Mini>
            <Mini $w={32} aria-label="Decrease size"><TextA /></Mini>
          </Row>
          <Row $h={37}>
            <Sq $on aria-label="Bold text"><BoldB s={16} /></Sq>
            <Sq aria-label="Italic text"><ItalicI s={15} /></Sq>
            <Sq aria-label="Underline text"><UnderU s={16} /></Sq>
            <Sq aria-label="Strikethrough"><Icon size={15} sw={1.5}><path d="M12 4q-1-2.700-4-2.700T4 4q0 1.500 1.500 2.500M4 12q1 2.700 4 2.700T12 12q0-1.500-1-2.300M1 8h14" /></Icon></Sq>
            <Sq aria-label="Text color"><FontColor /><Caret w={5} /></Sq>
            <Sq aria-label="Text highlight"><Marker /><Caret w={5} /></Sq>
          </Row>
          <Row $h={37}>
            <Sq aria-label="Align left"><Lines xs={[[1, 15], [1, 9], [1, 12]]} /></Sq>
            <Sq $on aria-label="Align center"><Lines xs={[[1, 15], [4, 12], [3, 13]]} color={green} /></Sq>
            <Sq aria-label="Align right"><Lines xs={[[1, 15], [7, 15], [5, 15]]} /></Sq>
            <Sq aria-label="Justify"><Lines xs={[[1, 15], [1, 15], [1, 15]]} /></Sq>
            <Sq aria-label="Superscript"><Icon w={18} h={16} box="0 0 18 16" sw={1.6}><path d="M1.500 5l8.500 10M10 5L1.500 15" /><path d="M12.800 1.800q.2-1 1.500-1t1.500 1q0 .8-3 3.200h3.200" stroke="#1fb46a" strokeWidth="1.300" /></Icon></Sq>
            <Sq aria-label="Subscript"><Icon w={16} h={16} sw={1.6}><path d="M1.500 3l8.500 10M10 3L1.500 13" /></Icon></Sq>
          </Row>
        </FontRows>
      </Block>

      <Block>
        <Heading>Topic</Heading>
        <Row><Name $w={41}>Shape</Name><Pick aria-label="Shape"><Icon w={20} h={14} box="0 0 20 14" sw={1.5} color="#555"><rect x="1" y="1" width="18" height="12" rx="5.500" /></Icon><Chevron /></Pick><Push>Corner</Push><Pick aria-label="Corner"><Icon size={14} box="0 0 14 14" sw={1.5} color="#777"><path d="M0 1h13v12" /></Icon><Chevron /></Pick></Row>
        <Row><CheckBox text="Fill Color" on /><End><Pick aria-label="Fill style"><Icon w={16} h={8} box="0 0 16 8"><rect width="16" height="8" fill="#222" stroke="none" /></Icon><Chevron /></Pick><ColorPick $w={85} aria-label="Fill color"><Swatch $w={61} $c={fill} /><Chevron /></ColorPick></End></Row>
        <Row><CheckBox text="Shadow" /></Row>
        <Row><CheckBox text="Customize Width" /></Row>
      </Block>

      <Block>
        <Heading>Border</Heading>
        <Row><CheckBox text="Border Color" on /><End><ColorPick $w={85} aria-label="Border color"><Swatch $w={61} $c={fill} /><Chevron /></ColorPick></End></Row>
        <Row><Name $w={47}>Weight</Name><Pick aria-label="Border weight"><Stroke sw={3} /><Chevron /></Pick><Push>Dashes</Push><Pick aria-label="Border dashes"><Stroke sw={1} /><Chevron /></Pick></Row>
      </Block>

      <Block>
        <Heading>Layout</Heading>
        <Row $h={52}><Name>Structure</Name><End><Pick $w={85} $h={46} aria-label="Structure"><TileArt w={38} h={30} box="9 13 38 30">{logicRight}</TileArt><Chevron /></Pick></End></Row>
      </Block>

      <Block>
        <Heading>Branch</Heading>
        <Row><Name>Connector Style</Name><End><Pick aria-label="Connector style"><TileArt w={24} h={20} box="0 0 24 20"><g stroke="#555" strokeWidth="1.300"><path d="M5 10h10M16 3Q8 4 8 10t8 7" /></g><Node c={[3, 10]} w={6} h={4} r={1} /><Node c={[18, 3]} w={8} h={3.5} r={1} /><Node c={[18, 10]} w={8} h={3.5} r={1} /><Node c={[18, 17]} w={8} h={3.5} r={1} /></TileArt><Chevron /></Pick></End></Row>
        <Row><Name $w={47}>Line</Name><ColorPick aria-label="Line color"><Swatch $w={28} $c="#444" /><Chevron /></ColorPick><Push>Topic</Push><ColorPick aria-label="Topic color"><Swatch $w={28} $c="#fff" /><Chevron /></ColorPick></Row>
        <Row><Name $w={47}>Weight</Name><Pick aria-label="Branch weight"><Stroke sw={3} /><Chevron /></Pick><Push>Dashes</Push><Pick aria-label="Branch dashes"><Stroke sw={1} /><Chevron /></Pick></Row>
        <Row><Name $w={47}>Arrow</Name><Pick aria-label="Arrow"><Stroke sw={1.5} c="#888" /><Chevron /></Pick><Push>Tapered</Push><Pick aria-label="Tapered"><Icon size={14} box="0 0 14 14"><path d="M0 13.500C0 4 5 .5 14 .5 7 2 3 5 3 13.500z" fill={ink} stroke="none" /></Icon><Chevron /></Pick></Row>
        <ResetBtn>Reset style</ResetBtn>
      </Block>
    </PanelInner>
  </Panel>
);

/* ---------- status bar ---------- */

const Status = styled.footer`height: 25px; flex: none; border-top: 1px solid #d6d6d6; overflow: hidden; background: #f4f4f4;`;
const StatusRow = styled.div`display: flex; align-items: center; height: 32px; padding: 0 12px 0 3px; color: #333;`;
const SBtn = styled.button<{ $w: number }>`display: flex; align-items: center; justify-content: center; gap: 6px; width: ${p => p.$w}px; height: 28px; flex: none;`;
const PageTab = styled.a`width: 78px; text-align: center; color: ${green}; font-weight: 700; text-decoration: none; font-size: 12px;`;
const Spacer = styled.span`flex: 1;`;
const Info = styled.span`font-size: 11px; margin-right: 10px;`;
const Range = styled.input`
  appearance: none; width: 100px; height: 14px; background: none;
  &::-webkit-slider-runnable-track { height: 2px; background: linear-gradient(90deg, #111 43%, #dadada 43%); }
  &::-webkit-slider-thumb { appearance: none; width: 12px; height: 12px; margin-top: -5px; border: 2px solid #111; border-radius: 50%; background: #fff; }
`;
const SRule = styled(VRule)`height: 24px;`;

const StatusView = () => (
  <Status>
    <StatusRow>
      <SBtn $w={32} aria-label="Outline list"><Icon w={17} h={14} box="0 0 17 14" sw={1.2}><path d="M0 1.500h16M0 5.500h7M0 9h6M0 12.500h6M12 13.500q-4-3.500-4-6a4 4 0 0 1 8 0q0 2.500-4 6z" /><circle cx="12" cy="7.500" r=".6" /></Icon></SBtn>
      <SBtn $w={32} aria-label="Thumbnails"><Icon w={16} h={12} box="0 0 16 12" sw={1.2}><path d="M.8 1v10M15.200 1v10" /><rect x="3.500" y="1" width="9" height="10" /></Icon></SBtn>
      <Gap $w={5} />
      <SRule />
      <Gap $w={4} />
      <Select label="Page" value="Page-1" w={98} h={28} tint="#f1f1f5" flat />
      <Gap $w={4} />
      <SRule />
      <SBtn $w={54} aria-label="Add page"><Icon size={14} box="0 0 14 14" sw={1.2}><path d="M7 .7v12.600M.7 7h12.600" /></Icon></SBtn>
      <SRule />
      <PageTab href="#">Page-1</PageTab>
      <SRule />
      <Spacer />
      <Info>[Main Idea 101]</Info>
      <SBtn $w={28} aria-label="Mouse mode"><Icon w={14} h={15} box="0 0 14 15" sw={1.1}><path d="M7 1v6h5.500Q12.500 1 7 1z" fill="#777" /><rect x="1.500" y="1" width="11" height="13" rx="5.500" /><path d="M1.500 7h11" /></Icon></SBtn>
      <SBtn $w={28} aria-label="Map"><Icon w={16} h={14} box="0 0 16 14" sw={1.1}><path d="M1 1.500l4.700 1 4.600-1 4.700 1v11l-4.700-1-4.600 1-4.700-1zM5.700 2.500v11M10.300 1.500v11" /></Icon></SBtn>
      <SBtn $w={28} aria-label="Play"><PlayCircle /></SBtn>
      <SBtn $w={28} aria-label="Fit page"><Icon size={15} sw={1.1}><rect x="1" y="1" width="14" height="14" /><rect x="5" y="5.500" width="6" height="5" /><path d="M3 5V3.300h2M11 3.300h2V5M13 11v1.700h-2M5 12.700H3V11" /></Icon></SBtn>
      <SBtn $w={28} aria-label="Fill page"><Icon size={15} sw={1.1}><rect x="1" y="1" width="14" height="14" /><path d="M4 6V4h2M10 4h2v2M12 10v2h-2M6 12H4v-2" /></Icon></SBtn>
      <SBtn $w={20} aria-label="Zoom out"><Icon w={10} h={2} box="0 0 10 2"><path d="M0 1h10" /></Icon></SBtn>
      <Range type="range" defaultValue={42} aria-label="Zoom" />
      <SBtn $w={20} aria-label="Zoom in"><Icon size={10} box="0 0 10 10"><path d="M0 5h10M5 0v10" /></Icon></SBtn>
      <Select label="Zoom level" value="175%" w={50} h={24} tint="transparent" flat />
      <Gap $w={18} />
      <SBtn $w={20} aria-label="Full screen"><Icon size={14} box="0 0 14 14" sw={1.2}><path d="M.7 4.500V.7h3.800M9.500.7h3.800v3.800M13.300 9.500v3.800H9.500M4.500 13.300H.7V9.500" /></Icon></SBtn>
    </StatusRow>
  </Status>
);

export default function App() {
  return (
    <Shell>
      <Global />
      <Defs />
      <TitleBarView />
      <RibbonView />
      <Main>
        <StageView />
        <PanelView />
      </Main>
      <StatusView />
    </Shell>
  );
}
